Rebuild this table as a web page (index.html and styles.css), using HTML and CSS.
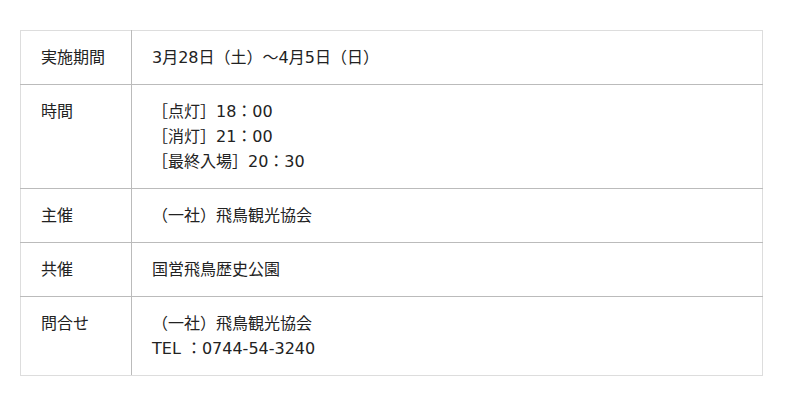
FILE: index.html
```html
<!DOCTYPE html>
<html lang="ja">
<head>
<meta charset="utf-8">
<link rel="stylesheet" href="styles.css">
</head>
<body>
<table class="info">
  <tr>
    <th>実施期間</th>
    <td>3月28日（土）～4月5日（日）</td>
  </tr>
  <tr>
    <th>時間</th>
    <td>［点灯］18：00<br>［消灯］21：00<br>［最終入場］20：30</td>
  </tr>
  <tr>
    <th>主催</th>
    <td>（一社）飛鳥観光協会</td>
  </tr>
  <tr>
    <th>共催</th>
    <td>国営飛鳥歴史公園</td>
  </tr>
  <tr>
    <th>問合せ</th>
    <td>（一社）飛鳥観光協会<br>TEL ：0744-54-3240</td>
  </tr>
</table>
</body>
</html>
```
FILE: styles.css
```css
html, body {
  margin: 0;
  padding: 0;
  background: #fff;
}
body {
  padding: 30px 0 0 20px;
  font-family: "DejaVu Sans", "Noto Sans CJK JP", sans-serif;
  font-size: 16px;
  line-height: 25px;
  color: #222;
}
.info {
  border-collapse: collapse;
  width: 743px;
}
.info th,
.info td {
  text-align: left;
  vertical-align: top;
  font-weight: normal;
  padding: 14px 20px;
  border-top: 1px solid #bbb;
  border-bottom: 1px solid #bbb;
}
.info th {
  width: 70px;
  border-left: 1px solid #ddd;
  border-right: 1px solid #bbb;
}
.info td {
  border-right: 1px solid #ddd;
}
.info tr:first-child th,
.info tr:first-child td {
  border-top-color: #ddd;
}
.info tr:last-child th,
.info tr:last-child td {
  border-bottom-color: #ddd;
}
```
